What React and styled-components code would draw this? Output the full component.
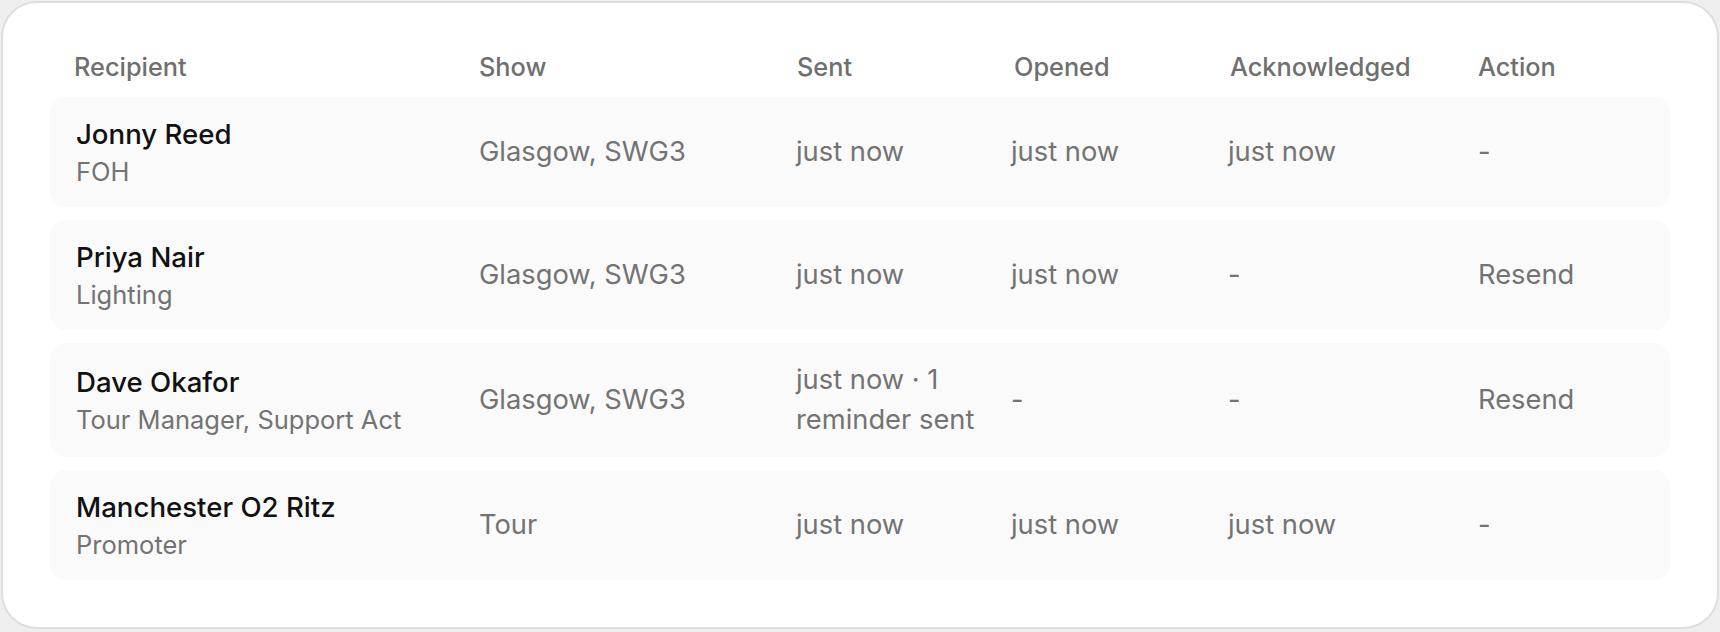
import React from "react";
import styled, { createGlobalStyle } from "styled-components";

const GlobalStyle = createGlobalStyle`
  html, body {
    margin: 0;
    padding: 0;
    background: #efefef;
  }
  body {
    font-family: Inter, "Noto Sans", "Liberation Sans", sans-serif;
    -webkit-font-smoothing: antialiased;
  }
`;

// header labels sit a little off the body cells, so each has its own track list
const HEAD_COLUMNS = "405px 318px 217px 216px 248px 1fr";
const ROW_COLUMNS = "403px 317px 215px 217px 250px 1fr";

const rows = [
  {
    name: "Jonny Reed",
    role: "FOH",
    show: "Glasgow, SWG3",
    sent: "just now",
    opened: "just now",
    acknowledged: "just now",
    action: "-",
  },
  {
    name: "Priya Nair",
    role: "Lighting",
    show: "Glasgow, SWG3",
    sent: "just now",
    opened: "just now",
    acknowledged: "-",
    action: "Resend",
  },
  {
    name: "Dave Okafor",
    role: "Tour Manager, Support Act",
    show: "Glasgow, SWG3",
    sent: "just now · 1 reminder sent",
    opened: "-",
    acknowledged: "-",
    action: "Resend",
  },
  {
    name: "Manchester O2 Ritz",
    role: "Promoter",
    show: "Tour",
    sent: "just now",
    opened: "just now",
    acknowledged: "just now",
    action: "-",
  },
];

function App() {
  return (
    <Page>
      <GlobalStyle />
      <Card>
        <HeaderRow>
          <HeadCell>Recipient</HeadCell>
          <HeadCell>Show</HeadCell>
          <HeadCell>Sent</HeadCell>
          <HeadCell>Opened</HeadCell>
          <HeadCell>Acknowledged</HeadCell>
          <HeadCell>Action</HeadCell>
        </HeaderRow>
        <RowList>
          {rows.map((r) => (
            <Row key={r.name}>
              <Recipient>
                <Name>{r.name}</Name>
                <Role>{r.role}</Role>
              </Recipient>
              <Cell>{r.show}</Cell>
              <Cell>{r.sent}</Cell>
              <Cell>{r.opened}</Cell>
              <Cell>{r.acknowledged}</Cell>
              {r.action === "Resend" ? (
                <ActionButton type="button">{r.action}</ActionButton>
              ) : (
                <Cell>{r.action}</Cell>
              )}
            </Row>
          ))}
        </RowList>
      </Card>
    </Page>
  );
}

export default App;

const Page = styled.div`
  padding: 1px 1px 3px 1px;
  height: 632px;
  box-sizing: border-box;
`;

const Card = styled.div`
  background: #ffffff;
  border: 2px solid #dedede;
  border-radius: 36px;
  padding: 44px 47px 47px 47px;
  box-sizing: border-box;
  height: 100%;
`;

const HeaderRow = styled.div`
  display: grid;
  grid-template-columns: ${HEAD_COLUMNS};
  padding: 0 26px 0 24px;
  margin-bottom: 10px;
`;

const HeadCell = styled.div`
  font-size: 25.3px;
  line-height: 40px;
  font-weight: 500;
  color: #6f6f6f;
  white-space: nowrap;
`;

const RowList = styled.div`
  display: flex;
  flex-direction: column;
  gap: 13px;
`;

const Row = styled.div`
  display: grid;
  grid-template-columns: ${ROW_COLUMNS};
  align-items: center;
  min-height: 110px;
  box-sizing: border-box;
  padding: 17px 26px;
  background: #fafafa;
  border-radius: 16px;
`;

const Recipient = styled.div`
  display: flex;
  flex-direction: column;
`;

const Name = styled.div`
  font-size: 27.6px;
  line-height: 40px;
  font-weight: 500;
  color: #111111;
`;

const Role = styled.div`
  font-size: 25.5px;
  line-height: 36px;
  color: #737373;
`;

const Cell = styled.div`
  font-size: 27.3px;
  line-height: 40px;
  color: #737373;
  padding-right: 18px;
`;

const ActionButton = styled.button`
  justify-self: start;
  background: none;
  border: none;
  padding: 0;
  font-family: inherit;
  font-size: 27.3px;
  line-height: 40px;
  color: #737373;
  cursor: pointer;
`;
